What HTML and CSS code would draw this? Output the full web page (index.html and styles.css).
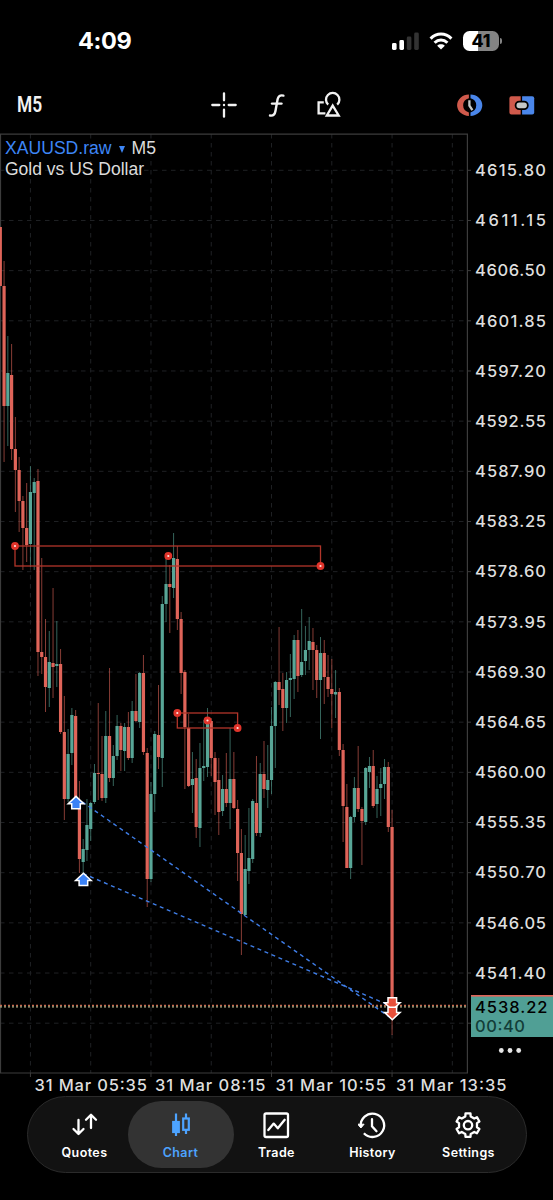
FILE: index.html
```html
<!DOCTYPE html>
<html lang="en">
<head>
  <meta charset="UTF-8" />
  <meta name="viewport" content="width=device-width, initial-scale=1.0" />
  <title>XAUUSD.raw M5</title>
  <link rel="stylesheet" href="styles.css">
</head>
<body>
  <div class="status-bar">
    <span class="time">4:09</span>
    <div class="status-icons">
      <svg width="27" height="18" viewBox="0 0 27 18">
        <rect x="0" y="11" width="4.6" height="7" rx="1.4" fill="#fff" />
        <rect x="7.4" y="8" width="4.6" height="10" rx="1.4" fill="#fff" />
        <rect x="14.8" y="4.5" width="4.6" height="13.5" rx="1.4" fill="#333" />
        <rect x="22.2" y="0.5" width="4.6" height="17.5" rx="1.4" fill="#333" />
      </svg>
      <svg width="24" height="18" viewBox="0 0 24 18">
        <g fill="none" stroke="#fff" stroke-width="3">
          <path d="M1.6 6.6 C7.6 0.4 16.4 0.4 22.4 6.6" />
          <path d="M5.6 10.8 C9.4 7 14.6 7 18.4 10.8" />
        </g>
        <path d="M12 17.6 L8.2 13.7 C10.2 11.8 13.8 11.8 15.8 13.7 Z" fill="#fff" />
      </svg>
      <div class="battery"><span>41</span></div>
    </div>
  </div>

  <div class="toolbar">
    <div class="timeframe"><span>M5</span></div>
    <div class="tools">
      <svg width="28" height="28" viewBox="0 0 28 28" fill="none" stroke="#f2f2f2" stroke-width="2.3" stroke-linecap="round">
        <path d="M14 2.3V9.3M14 18.7V25.7M2.3 14H9.3M18.7 14H25.7" />
        <circle cx="14" cy="14" r="1.2" fill="#f2f2f2" stroke="none" />
      </svg>
      <svg width="28" height="28" viewBox="0 0 28 28" fill="none" stroke="#f2f2f2" stroke-width="2.4" stroke-linecap="round">
        <path d="M20.4 4.6 C17.1 3.8 15.2 5.2 14.6 8.3 L12.4 20.2 C11.8 23.6 10 25 7 24.5" />
        <path d="M9 12.6H18.5" />
      </svg>
      <svg width="28" height="28" viewBox="0 0 28 28" fill="none" stroke="#f2f2f2" stroke-width="2.3">
        <path d="M8.8 11.3H3.6V22.3H10.4" />
        <path d="M13.2 13.6 A6.7 6.7 0 1 1 22.2 13.6" />
        <path d="M17.7 14.6 L23.7 24.5 H11.8 Z" />
      </svg>
    </div>
    <div class="tools tools-right">
      <svg width="28" height="28" viewBox="0 0 28 28" fill="none">
        <path d="M12.9 3.6 A11.8 10.7 0 0 0 12.9 25 V21.4 A8 7.4 0 0 1 12.9 7.2 Z" fill="#d05a4c" />
        <path d="M14.5 3.6 A11.8 10.7 0 0 1 14.5 25 V21.4 A8 7.4 0 0 0 14.5 7.2 Z" fill="#4a86ea" />
        <path d="M13.4 9.2V14.6L16.4 19.2" stroke="#c4c8c8" stroke-width="2.3" />
      </svg>
      <svg width="28" height="28" viewBox="0 0 28 28">
        <path d="M3.4 5.3H12.7V23.5H3.4A2 2 0 0 1 1.4 21.5V7.3A2 2 0 0 1 3.4 5.3Z" fill="#d05a4c" />
        <path d="M14.1 5.3H24.2A2 2 0 0 1 26.2 7.3V21.5A2 2 0 0 1 24.2 23.5H14.1Z" fill="#4a86ea" />
        <rect x="7.6" y="10.6" width="12.2" height="7.6" rx="3.6" fill="#c4c8c8" stroke="#000" stroke-width="1.8" />
      </svg>
    </div>
  </div>

  <div class="chart-area">
    <svg id="chart" width="553" height="966" viewBox="0 130 553 966"></svg>
    <div class="chart-title">
      <div><span class="symbol">XAUUSD.raw</span><span class="caret"></span>M5</div>
      <div class="description">Gold vs US Dollar</div>
    </div>
  </div>

  <nav class="tab-bar">
    <a class="tab">
      <svg width="30" height="30" viewBox="0 0 30 30" fill="none" stroke="#fff" stroke-width="2.3" stroke-linecap="round" stroke-linejoin="round">
        <path d="M8.5 9V22.5M3.5 18L8.5 23L13.5 18" />
        <path d="M21 17V4M16 8.7L21 3.7L26 8.7" />
      </svg>
      <span>Quotes</span>
    </a>
    <a class="tab active">
      <svg width="30" height="30" viewBox="1 0 30 30" fill="none" stroke="#4da3ff" stroke-width="2.2">
        <path d="M11 2.5V25M21 2.5V7M21 19V23" />
        <rect x="8.2" y="11" width="5.6" height="10" fill="#4da3ff" />
        <rect x="18.2" y="7.5" width="5.6" height="11.3" />
      </svg>
      <span>Chart</span>
    </a>
    <a class="tab">
      <svg width="30" height="30" viewBox="0 0 30 30" fill="none" stroke="#fff" stroke-width="2.3" stroke-linejoin="round">
        <rect x="2.5" y="2.5" width="23.5" height="23.5" rx="1.6" />
        <path d="M6.3 19L11.7 12.6L15.8 17.3L22.7 8.8" stroke-linecap="round" />
      </svg>
      <span>Trade</span>
    </a>
    <a class="tab">
      <svg width="30" height="30" viewBox="1.5 0 30 30" fill="none" stroke="#fff" stroke-width="2.3">
        <path d="M4.3 15.5 A11.7 11.7 0 1 1 7.4 22.3" />
        <path d="M1.2 13.2H7.6L4.4 17Z" fill="#fff" stroke-width="1" />
        <path d="M15.5 8.2V15.2L20 20.2" stroke-linecap="round" />
      </svg>
      <span>History</span>
    </a>
    <a class="tab">
      <svg width="30" height="30" viewBox="1 0 30 30" fill="none" stroke="#fff" stroke-width="2.3" stroke-linejoin="round">
        <path id="gear" />
        <circle cx="15" cy="14.2" r="4.2" />
      </svg>
      <span>Settings</span>
    </a>
  </nav>

  <script src="chart.js"></script>
</body>
</html>
```

FILE: styles.css
```css
* {
  box-sizing: border-box;
}

body {
  margin: 0;
  width: 553px;
  height: 1200px;
  overflow: hidden;
  background: #000;
  color: #fff;
  font-family: Inter, "Liberation Sans", sans-serif;
}

.status-bar {
  display: flex;
  justify-content: space-between;
  align-items: center;
  height: 81px;
  padding: 0 54px 0 78px;
}

.time {
  font-size: 23.5px;
  font-weight: 700;
  letter-spacing: -0.4px;
}

.status-icons {
  display: flex;
  align-items: center;
  gap: 10px;
}

.battery {
  position: relative;
  width: 36px;
  height: 20px;
  border-radius: 6.5px;
  background: linear-gradient(to right, #fff 42%, #848484 42%);
  color: #000;
  font-size: 17.5px;
  font-weight: 800;
  line-height: 20px;
  text-align: center;
}

.battery::after {
  content: "";
  position: absolute;
  right: -3px;
  top: 7px;
  width: 2px;
  height: 6px;
  border-radius: 0 2px 2px 0;
  background: #848484;
}

.toolbar {
  display: flex;
  align-items: center;
  height: 49px;
  padding: 0 17px 1px;
}

.timeframe {
  width: 193px;
  font-family: Roboto, sans-serif;
  font-size: 22px;
  font-weight: 600;
  line-height: 26px;
  color: #f2f2f2;
}

.timeframe span {
  display: inline-block;
  transform: scaleX(0.79);
  transform-origin: left;
}

.tools {
  display: flex;
  gap: 24.5px;
}

.tools svg {
  display: block;
}

.tools-right {
  margin-left: auto;
}

.chart-area {
  position: relative;
  height: 966px;
}

#chart {
  display: block;
}

.chart-title {
  position: absolute;
  left: 5px;
  top: 7px;
  font-family: "Liberation Sans", sans-serif;
  font-size: 17.6px;
  line-height: 22px;
  color: #dcdcdc;
}

.description {
  font-size: 17.5px;
  line-height: 21px;
}

.symbol {
  color: #3d86f6;
}

.caret {
  display: inline-block;
  margin: 0 7px 1px 7px;
  border: 3.5px solid transparent;
  border-top: 7px solid #3d86f6;
  border-bottom: 0;
}

.grid {
  stroke: #1f2124;
  stroke-dasharray: 4.5 4.5;
}

.frame {
  fill: none;
  stroke: #3c3c3c;
  stroke-width: 1.2;
}

.axis {
  fill: #dedede;
  font-family: Inter, sans-serif;
  font-size: 16.5px;
  font-weight: 500;
}

.up {
  fill: #58a697;
}

.down {
  fill: #df6459;
}

.wick {
  opacity: 0.6;
}

.zone {
  fill: none;
  stroke: #b2352a;
  stroke-width: 1.3;
}

.link {
  stroke: #3f7ee8;
  stroke-width: 1.4;
  stroke-dasharray: 4 3.6;
}

.tab-bar {
  display: grid;
  grid-template-columns: repeat(5, 96px);
  justify-content: center;
  width: 500px;
  height: 77px;
  margin: 0 auto;
  padding: 4px 0;
  border: 1px solid #2b2b2b;
  border-radius: 38.5px;
  background: #121212;
}

.tab {
  display: flex;
  flex-direction: column;
  align-items: center;
  padding-top: 10px;
  font-size: 12.5px;
  font-weight: 600;
  letter-spacing: 0.4px;
  line-height: 16px;
}

.tab svg {
  display: block;
  margin-bottom: 4px;
}

.active {
  margin: 0 -5px;
  border-radius: 34px;
  background: #333;
  color: #4da3ff;
}
```

FILE: chart.js
```js
// [high, body top, body bottom, low, rising] in chart units
const candles = [
  [227,227,286,286,0],[261,286,406,462,0],[336,373,406,446,1],[344,375,449,460,0],[417,449,470,512,0],
  [457,470,501,532,0],[496,501,528,570,0],[483,528,545,562,0],[466,492,544,567,1],[478,482,493,570,1],
  [469,481,652,676,0],[558,652,657,674,0],[619,657,687,712,0],[631,662,688,707,1],[588,663,667,698,0],
  [621,664,666,687,1],[649,664,732,734,0],[696,732,799,820,0],[729,754,799,802,1],[708,715,753,765,1],
  [710,716,798,800,0],[781,800,859,873,0],[839,849,862,873,1],[799,825,850,861,1],[802,803,829,841,1],
  [764,773,802,804,1],[703,773,774,800,0],[736,774,798,801,0],[711,736,798,803,1],[668,736,778,782,0],
  [745,756,778,786,1],[715,726,756,760,1],[723,726,750,771,0],[723,727,751,771,1],[712,727,758,760,0],
  [701,711,758,763,1],[674,711,721,722,0],[672,673,722,728,1],[655,673,752,755,0],[748,753,879,907,0],
  [782,794,879,882,1],[731,734,794,812,1],[685,735,757,769,0],[596,604,758,787,1],[558,584,604,622,1],
  [565,584,587,633,0],[533,558,588,598,1],[546,559,619,630,0],[612,619,673,694,0],[670,672,727,789,0],
  [714,728,786,787,0],[752,779,785,813,1],[759,778,827,838,0],[743,768,828,847,1],[720,766,768,781,1],
  [708,721,767,777,1],[718,721,758,776,0],[752,758,782,815,0],[758,780,812,835,0],[775,789,811,816,1],
  [753,789,803,807,0],[728,779,803,829,1],[752,779,808,809,0],[800,809,853,881,0],[829,853,914,955,0],
  [835,869,915,915,1],[808,858,871,884,1],[799,801,859,863,1],[756,803,833,836,0],[763,774,833,837,1],
  [741,774,789,798,0],[745,780,790,808,1],[707,726,780,794,1],[681,682,726,768,1],[627,682,690,705,0],
  [673,689,708,731,0],[672,680,708,723,1],[654,678,680,717,1],[635,640,679,699,1],[630,640,676,692,0],
  [609,662,675,677,1],[626,650,661,675,1],[617,641,650,670,1],[628,642,650,690,0],[645,650,680,698,0],
  [637,653,680,739,1],[640,653,677,704,0],[655,677,689,697,0],[659,689,694,728,0],[670,692,694.5,718,1],
  [688,692,750,756,0],[744,750,806,842,0],[784,807,868,868,0],[816,817,868,879,1],[777,788,817,822,1],
  [746,788,809,812,0],[807,809,821,865,0],[767,768,822,825,1],[757,766,772,788,1],[750,766,806,808,0],
  [776,789,804,818,1],[768,784,788,816,1],[759,767,784,799,1],[762,767,827,832,0],[810,827,1003,1035,0]
];

const STEP = 3.767;
const ROW = 50.17;
const xAt = i => 0.3 + i * STEP;
let out = "";

// grid
for (let i = 8; i <= 120; i += 16) {
  out += `<line class="grid" x1="${xAt(i)}" x2="${xAt(i)}" y1="134" y2="1073" />`;
}
for (let k = 0; k < 18; k++) {
  const y = 170.3 + k * ROW;
  out += `<line class="grid" x1="0" x2="467" y1="${y}" y2="${y}" />`;
  out += `<line x1="467" x2="471" y1="${y}" y2="${y}" stroke="#3c3c3c" />`;
  if (k < 17) {
    const price = (4615.8 - k * 4.65).toFixed(2);
    out += `<text class="axis" x="475" y="${y + 5.7}" textLength="71">${price}</text>`;
  }
}

out += `<path class="frame" d="M0.5 1073V134.2H467.4V1073H0" />`;

// candles
candles.forEach(([high, top, bottom, low, rising], i) => {
  const cls = rising ? "up" : "down";
  const x = xAt(i);
  out += `<rect class="${cls} wick" x="${x - 0.5}" y="${high}" width="1" height="${low - high}" />`;
  out += `<rect class="${cls}" x="${x - 1.6}" y="${top}" width="3.2" height="${bottom - top}" />`;
});

// bid and ask
out += `<line x1="0" x2="467" y1="1005.3" y2="1005.3" stroke="#c8694f" stroke-width="1.2" stroke-dasharray="2 2" />`;
out += `<line x1="0" x2="467" y1="1006.9" y2="1006.9" stroke="#b5b48a" stroke-width="1.2" stroke-dasharray="2 2" />`;

// zones with their handles
out += `<rect class="zone" x="15" y="546" width="305.5" height="20" />`;
out += `<rect class="zone" x="177.3" y="713" width="60.3" height="15" />`;
[[15,546],[168.3,556],[320.5,566],[177.3,713],[207.5,720.5],[237.6,728]].forEach(([x, y]) => {
  out += `<circle cx="${x}" cy="${y}" r="2.5" fill="#ffe3df" stroke="#e0342b" stroke-width="2.8" />`;
});

// deals
out += `<line class="link" x1="76" y1="797.5" x2="392" y2="1018.8" />`;
out += `<line class="link" x1="83" y1="873.5" x2="392" y2="1006.5" />`;
const arrow = (x, y, dir, color) =>
  `<path transform="translate(${x} ${y}) scale(1 ${dir})" d="M0 0.9L7.8 8.2H4.3V13.3H-4.3V8.2H-7.8Z" fill="${color}" stroke="#fff" stroke-width="1.5" />`;
out += arrow(76, 795.5, 1, "#3b82f6");
out += arrow(83.4, 872.3, 1, "#3b82f6");
out += arrow(392.3, 1011, -1, "#e8503a");
out += arrow(392.3, 1020.6, -1, "#e8503a");

// current price
out += `<rect x="471" y="995" width="82" height="42" fill="#509f95" />`;
out += `<rect x="471" y="995" width="82" height="1.6" fill="#df6459" />`;
out += `<text class="axis" x="475" y="1013" textLength="72.5" style="fill:#000">4538.22</text>`;
out += `<text class="axis" x="475" y="1032" textLength="50" style="fill:#123d38">00:40</text>`;
[501.3, 510, 518.7].forEach(x => {
  out += `<circle cx="${x}" cy="1050.5" r="2.4" fill="#e6e6e6" />`;
});

// time axis
[["05:35", 34.5, 112.5], ["08:15", 155, 110.5], ["10:55", 275.5, 110.5], ["13:35", 396, 110.5]].forEach(([t, x, w], k) => {
  const tick = xAt(8 + k * 32);
  out += `<line x1="${tick}" x2="${tick}" y1="1073" y2="1077" stroke="#3c3c3c" />`;
  out += `<text class="axis" x="${x}" y="1091" textLength="${w}">31 Mar ${t}</text>`;
});

document.getElementById("chart").innerHTML = out;

// settings gear, six teeth
let d = "";
for (let t = 0; t < 6; t++) {
  [[-30, 9], [-17, 9.2], [-12, 12], [12, 12], [17, 9.2]].forEach(([deg, r]) => {
    const a = (t * 60 + deg - 90) * Math.PI / 180;
    d += `${d ? "L" : "M"}${(15 + r * Math.cos(a)).toFixed(2)} ${(14.2 + r * Math.sin(a)).toFixed(2)}`;
  });
}
document.getElementById("gear").setAttribute("d", d + "Z");
```
